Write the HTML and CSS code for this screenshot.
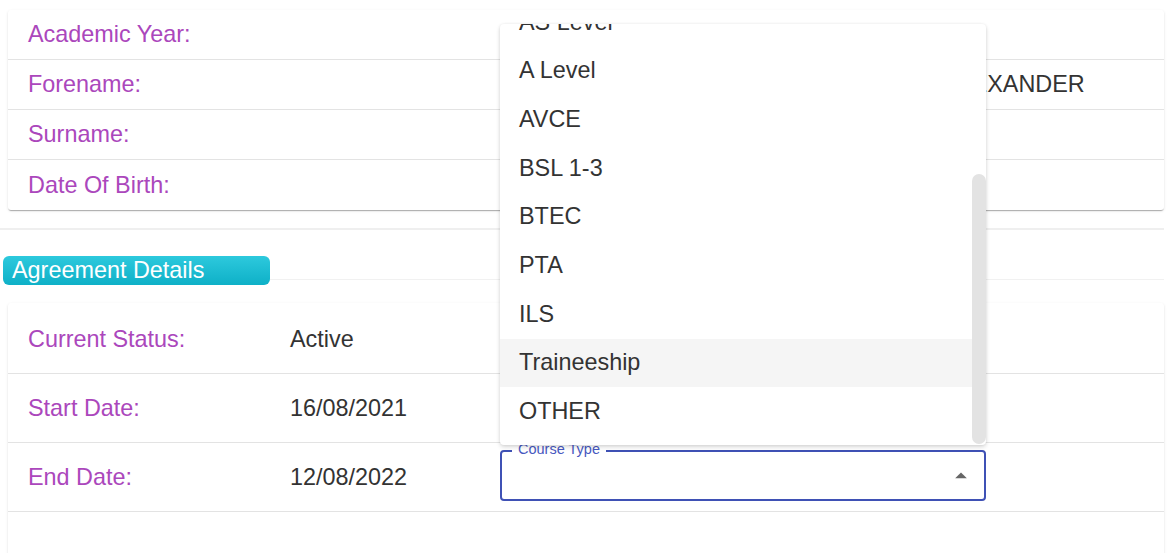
FILE: index.html
```html
<!DOCTYPE html>
<html lang="en">
<head>
<meta charset="utf-8">
<title>Agreement Details</title>
<link rel="stylesheet" href="styles.css">
</head>
<body>
<div class="page">
  <section class="card card-student">
    <div class="row"><span class="label">Academic Year:</span><span class="value"></span></div>
    <div class="row"><span class="label">Forename:</span><span class="value">ALEXANDER</span></div>
    <div class="row"><span class="label">Surname:</span><span class="value"></span></div>
    <div class="row"><span class="label">Date Of Birth:</span><span class="value"></span></div>
  </section>

  <div class="divider"></div>

  <div class="section-head">
    <h2 class="badge">Agreement Details</h2>
    <div class="head-rule"></div>
  </div>

  <section class="card card-agreement">
    <div class="row"><span class="label">Current Status:</span><span class="value">Active</span><span></span></div>
    <div class="row"><span class="label">Start Date:</span><span class="value">16/08/2021</span><span></span></div>
    <div class="row">
      <span class="label">End Date:</span><span class="value">12/08/2022</span>
      <div class="select">
        <span class="select-label">Course Type</span>
        <svg class="caret" viewBox="0 0 24 24" width="28" height="28"><path d="M7 14l5-5 5 5z" fill="#666"/></svg>
      </div>
    </div>
    <div class="row row-empty"></div>
  </section>

  <div class="menu">
    <ul class="menu-list">
      <li class="menu-item">AS Level</li>
      <li class="menu-item">A Level</li>
      <li class="menu-item">AVCE</li>
      <li class="menu-item">BSL 1-3</li>
      <li class="menu-item">BTEC</li>
      <li class="menu-item">PTA</li>
      <li class="menu-item">ILS</li>
      <li class="menu-item is-hover">Traineeship</li>
      <li class="menu-item">OTHER</li>
    </ul>
    <div class="scroll-track"><div class="scroll-thumb"></div></div>
  </div>
</div>
</body>
</html>
```

FILE: styles.css
```css
* { box-sizing: border-box; }

html, body {
  margin: 0;
  padding: 0;
  background: #fff;
  font-family: "Liberation Sans", Arial, sans-serif;
  font-size: 23.4px;
  color: #333;
  overflow: hidden;
}

.page {
  position: relative;
  width: 1174px;
  height: 553px;
  padding-top: 10px;
  overflow: hidden;
}

.card {
  margin: 0 10px 0 8px;
  background: #fff;
  border-radius: 3px;
  box-shadow: 0 2px 1px -1px rgba(0,0,0,0.2), 0 1px 1px 0 rgba(0,0,0,0.10), 0 1px 3px 0 rgba(0,0,0,0.10);
}

.row {
  display: grid;
  align-items: center;
  padding-left: 20px;
  border-bottom: 1px solid #e3e3e3;
}

.label { color: #ab47bc; }
.value { color: #333; }

.card-student .row {
  grid-template-columns: 915px 1fr;
  height: 50px;
}
.card-student .row:last-child {
  border-bottom: none;
}

.divider {
  margin-top: 18px;
  height: 2px;
  margin-right: 10px;
  background: #efefef;
}

.section-head {
  display: flex;
  align-items: flex-start;
  margin-top: 26px;
  margin-right: 10px;
}

.badge {
  margin: 0 0 0 3px;
  width: 267px;
  height: 29px;
  padding-left: 9px;
  border-radius: 6px;
  background: linear-gradient(180deg, #2dc9dd 0%, #0eb0c7 100%);
  color: #fff;
  font-size: 23.4px;
  font-weight: normal;
  line-height: 29px;
}

.head-rule {
  flex: 1;
  height: 24px;
  border-bottom: 1px solid #f1f1f1;
}

.card-agreement {
  margin-top: 18px;
  padding-top: 2px;
  height: 280px;
}

.card-agreement .row {
  grid-template-columns: 262px 210px 486px;
  height: 69px;
}

.card-agreement .row-empty {
  border-bottom: none;
}

.select {
  position: relative;
  height: 51px;
  margin-bottom: 3px;
  border: 2px solid #3f51b5;
  border-radius: 4px;
  display: flex;
  align-items: center;
  justify-content: flex-end;
  padding-right: 9px;
}

.select-label {
  position: absolute;
  left: 10px;
  top: -10px;
  padding: 0 6px;
  background: #fff;
  color: #4758c0;
  font-size: 14.5px;
  line-height: 15px;
}

.caret { display: block; }

.menu {
  position: absolute;
  left: 500px;
  top: 24px;
  width: 486px;
  height: 421px;
  background: #fff;
  border-radius: 4px;
  overflow: hidden;
  display: flex;
  box-shadow: 0 2px 4px rgba(0,0,0,0.16), 0 0 3px rgba(0,0,0,0.06);
  z-index: 5;
}

.menu-list {
  flex: 1;
  margin: 0;
  padding: 0 0 9px 0;
  list-style: none;
  display: flex;
  flex-direction: column;
  justify-content: flex-end;
  overflow: hidden;
}

.menu-item {
  flex: 0 0 48.7px;
  display: flex;
  align-items: center;
  padding-left: 19px;
  color: #333;
  font-size: 23.4px;
}

.menu-item.is-hover {
  background: #f5f5f5;
}

.scroll-track {
  width: 14px;
  display: flex;
  flex-direction: column;
  justify-content: flex-end;
  padding-bottom: 1px;
}

.scroll-thumb {
  height: 270px;
  background: #e3e3e3;
  border-radius: 7px;
}
```
